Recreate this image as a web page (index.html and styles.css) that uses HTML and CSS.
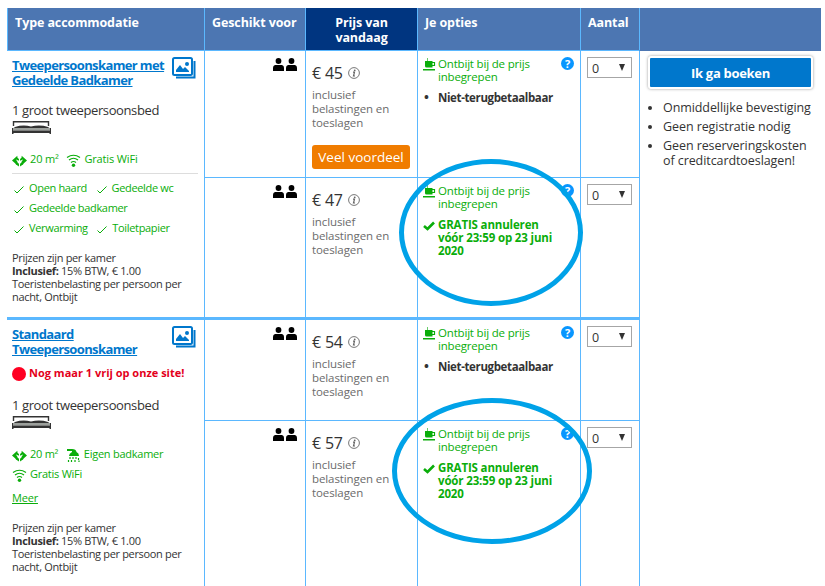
FILE: index.html
```html
<!DOCTYPE html>
<html lang="nl">
<head>
    <meta charset="UTF-8">
    <meta name="viewport" content="width=device-width, initial-scale=1.0">
    <title>Beschikbare kamers</title>
    <link rel="stylesheet" href="styles.css">
</head>
<body>

    <!-- Iconen -->
    <svg class="sprite">
        <symbol id="i-photo" viewBox="0 0 24 22">
            <path d="M22.500 4v16.500H4" fill="none" stroke="currentColor" stroke-width="2"/>
            <rect x="1" y="1" width="19" height="17" rx="1.500" fill="#fff" stroke="currentColor" stroke-width="2"/>
            <path d="M4 15v-2l4-5 3 4 2-2 4 4v1z" fill="currentColor"/>
            <circle cx="15" cy="7" r="2" fill="currentColor"/>
        </symbol>
        <symbol id="i-bed" viewBox="0 0 39 13">
            <path d="M1.500 5V.7h35V5" fill="none" stroke="#333" stroke-width="1.400"/>
            <path d="M3 6q8-2.500 16-.5Q28 3.500 36 6l2 1.500H1z" fill="#333"/>
            <path d="M1 7h37v2.500H1z" fill="#9ca09c"/>
            <path d="M0 7h1v2.500h37V7h1v6h-1.500v-1h-36v1H0z" fill="#333"/>
        </symbol>
        <symbol id="i-size" viewBox="0 0 14 12">
            <path d="M0 6l5-4.500v9zM14 6L9 1.500v9z" fill="currentColor"/>
            <path d="M3.500 6.500l3 2.500v2.500l-3-2zM10.500 6.500l-3 2.500v2.500l3-2zM4.500 3l2 1.500v1.800l-2-1zM9.500 3l-2 1.500v1.800l2-1z" fill="currentColor"/>
            <path d="M4 5.500l3 2.200 3-2.200" fill="none" stroke="#fff" stroke-width=".9"/>
        </symbol>
        <symbol id="i-wifi" viewBox="0 0 14 13">
            <path d="M.5 3.500Q7-1 13.500 3.500M2.500 6Q7 2.500 11.500 6M4.500 8.500Q7 6.500 9.500 8.500" fill="none" stroke="currentColor" stroke-width="1.200"/>
            <circle cx="7" cy="11.200" r="1.700" fill="currentColor"/>
        </symbol>
        <symbol id="i-shower" viewBox="0 0 13 13">
            <path d="M0 0h5q4 0 4.500 3Q12 4 12 7H2q0-2.500 3-4V2H0z" fill="currentColor"/>
            <path d="M3 8v2M6 8v2M9 8v2M11.500 9v2M1.500 11v2M4.500 11v2M8 11v2M12 11.500V13" stroke="currentColor" stroke-width="1.200"/>
        </symbol>
        <symbol id="i-check" viewBox="0 0 10 8">
            <path d="M.5 4.500l2.500 2.500L9.500.5" fill="none" stroke="currentColor" stroke-width="1"/>
        </symbol>
        <symbol id="i-bold-check" viewBox="0 0 12 10">
            <path d="M1 5l3.500 3L11 1.500" fill="none" stroke="currentColor" stroke-width="2.600"/>
        </symbol>
        <symbol id="i-person" viewBox="0 0 11 13">
            <circle cx="5.500" cy="3" r="2.900" fill="#000"/>
            <path d="M0 13V9.500Q0 7.500 2 7h7q2 .5 2 2.500V13z" fill="#000"/>
        </symbol>
        <symbol id="i-info" viewBox="0 0 12 12">
            <circle cx="6" cy="6" r="5.400" fill="none" stroke="#777" stroke-width="1"/>
            <circle cx="6.700" cy="3.300" r=".9" fill="#666"/>
            <path d="M5 5.200h1.500L5.500 9H7" fill="none" stroke="#666" stroke-width="1.200"/>
        </symbol>
        <symbol id="i-cup" viewBox="0 0 13 13">
            <path d="M4.500 3V0" stroke="currentColor" stroke-width="1" opacity=".6"/>
            <path d="M2 3h7.500v6.500H3.500Q2 9.500 2 8zM0 11h12v1.600H0z" fill="currentColor"/>
            <path d="M9 4.500h2.500v3H9" fill="none" stroke="currentColor" stroke-width="1.200"/>
        </symbol>
    </svg>

    <div class="rooms">
        <div class="head first">Type accommodatie</div>
        <div class="head">Geschikt voor</div>
        <div class="head price-head">Prijs van<br>vandaag</div>
        <div class="head">Je opties</div>
        <div class="head">Aantal</div>
        <div class="head last"></div>

        <!-- Kamer 1 -->
        <div class="room">
            <div class="room-top">
                <a class="room-name" href="#">Tweepersoonskamer met<br>Gedeelde Badkamer</a>
                <svg class="photo"><use href="#i-photo"/></svg>
            </div>
            <div class="bed">1 groot tweepersoonsbed</div>
            <svg class="bed-icon"><use href="#i-bed"/></svg>
            <div class="facilities">
                <span><svg class="fac"><use href="#i-size"/></svg>20 m²</span>
                <span><svg class="fac"><use href="#i-wifi"/></svg>Gratis WiFi</span>
            </div>
            <div class="checks">
                <span><svg class="tick"><use href="#i-check"/></svg>Open haard</span>
                <span><svg class="tick"><use href="#i-check"/></svg>Gedeelde wc</span>
                <br>
                <span><svg class="tick"><use href="#i-check"/></svg>Gedeelde badkamer</span>
                <br>
                <span><svg class="tick"><use href="#i-check"/></svg>Verwarming</span>
                <span><svg class="tick"><use href="#i-check"/></svg>Toiletpapier</span>
            </div>
            <div class="note">Prijzen zijn per kamer<br><b>Inclusief:</b> 15% BTW, € 1.00<br>Toeristenbelasting per persoon per<br>nacht, Ontbijt</div>
        </div>

        <div class="cell guests"><svg><use href="#i-person"/></svg><svg><use href="#i-person"/></svg></div>
        <div class="cell price">
            <div class="amount">€ 45 <svg><use href="#i-info"/></svg></div>
            <div class="tax">inclusief<br>belastingen en<br>toeslagen</div>
            <span class="deal">Veel voordeel</span>
        </div>
        <div class="cell options">
            <div class="meal"><svg><use href="#i-cup"/></svg><span>Ontbijt bij de prijs<br>inbegrepen</span><i class="help">?</i></div>
            <div class="policy"><span class="dot">•</span><span>Niet-terugbetaalbaar</span></div>
        </div>
        <div class="cell amount-cell"><div class="select"><span>0</span><i></i></div></div>

        <div class="book">
            <a class="book-btn" href="#">Ik ga boeken</a>
            <ul>
                <li>Onmiddellijke bevestiging</li>
                <li>Geen registratie nodig</li>
                <li>Geen reserveringskosten<br>of creditcardtoeslagen!</li>
            </ul>
        </div>

        <div class="cell end guests"><svg><use href="#i-person"/></svg><svg><use href="#i-person"/></svg></div>
        <div class="cell end price">
            <div class="amount">€ 47 <svg><use href="#i-info"/></svg></div>
            <div class="tax">inclusief<br>belastingen en<br>toeslagen</div>
        </div>
        <div class="cell end options">
            <div class="meal"><svg><use href="#i-cup"/></svg><span>Ontbijt bij de prijs<br>inbegrepen</span><i class="help">?</i></div>
            <div class="policy free"><svg><use href="#i-bold-check"/></svg><span>GRATIS annuleren<br>vóór 23:59 op 23 juni<br>2020</span></div>
            <div class="marker"></div>
        </div>
        <div class="cell end amount-cell"><div class="select"><span>0</span><i></i></div></div>

        <!-- Kamer 2 -->
        <div class="room second">
            <div class="room-top">
                <a class="room-name" href="#">Standaard<br>Tweepersoonskamer</a>
                <svg class="photo"><use href="#i-photo"/></svg>
            </div>
            <div class="alert"><i></i>Nog maar 1 vrij op onze site!</div>
            <div class="bed">1 groot tweepersoonsbed</div>
            <svg class="bed-icon"><use href="#i-bed"/></svg>
            <div class="facilities">
                <span><svg class="fac"><use href="#i-size"/></svg>20 m²</span>
                <span><svg class="fac"><use href="#i-shower"/></svg>Eigen badkamer</span>
                <br>
                <span><svg class="fac"><use href="#i-wifi"/></svg>Gratis WiFi</span>
            </div>
            <a class="more" href="#">Meer</a>
            <div class="note">Prijzen zijn per kamer<br><b>Inclusief:</b> 15% BTW, € 1.00<br>Toeristenbelasting per persoon per<br>nacht, Ontbijt</div>
        </div>

        <div class="cell guests"><svg><use href="#i-person"/></svg><svg><use href="#i-person"/></svg></div>
        <div class="cell price">
            <div class="amount">€ 54 <svg><use href="#i-info"/></svg></div>
            <div class="tax">inclusief<br>belastingen en<br>toeslagen</div>
        </div>
        <div class="cell options">
            <div class="meal"><svg><use href="#i-cup"/></svg><span>Ontbijt bij de prijs<br>inbegrepen</span><i class="help">?</i></div>
            <div class="policy"><span class="dot">•</span><span>Niet-terugbetaalbaar</span></div>
        </div>
        <div class="cell amount-cell"><div class="select"><span>0</span><i></i></div></div>

        <div class="cell bottom guests"><svg><use href="#i-person"/></svg><svg><use href="#i-person"/></svg></div>
        <div class="cell bottom price">
            <div class="amount">€ 57 <svg><use href="#i-info"/></svg></div>
            <div class="tax">inclusief<br>belastingen en<br>toeslagen</div>
        </div>
        <div class="cell bottom options">
            <div class="meal"><svg><use href="#i-cup"/></svg><span>Ontbijt bij de prijs<br>inbegrepen</span><i class="help">?</i></div>
            <div class="policy free"><svg><use href="#i-bold-check"/></svg><span>GRATIS annuleren<br>vóór 23:59 op 23 juni<br>2020</span></div>
            <div class="marker wide"></div>
        </div>
        <div class="cell bottom amount-cell"><div class="select"><span>0</span><i></i></div></div>
    </div>

</body>
</html>
```

FILE: styles.css
```css
* {
    box-sizing: border-box;
}
body {
    margin: 0;
    height: 586px;
    overflow: hidden;
    background-color: #fff;
    color: #333;
    font-family: "Segoe UI", "Open Sans", "Noto Sans", sans-serif;
    font-size: 12px;
    white-space: nowrap;
}
svg {
    display: block;
    flex: none;
}
.sprite {
    position: absolute;
    width: 0;
    height: 0;
}
.rooms {
    display: grid;
    grid-template-columns: 197px 101px 112px 163px 59px 182px;
    grid-template-rows: 43px 127px 142px 101px 165px;
    margin: 8px 0 0 7px;
}

/* kop van de tabel */
.head {
    padding: 7px 7px 0;
    border-left: 1px solid #5bb8ff;
    border-bottom: 1px solid #5bb8ff;
    background-color: #4c76b2;
    color: #fff;
    font-size: 12.5px;
    font-weight: bold;
    letter-spacing: -0.1px;
    line-height: 15px;
}
.price-head {
    background-color: #003580;
    text-align: center;
}
.head.last {
    border-bottom-color: #4c76b2;
}

.cell {
    border-left: 1px solid #5bb8ff;
    border-bottom: 1px solid #5bb8ff;
}
.cell.end {
    border-bottom-width: 3px;
}
.cell.bottom {
    border-bottom: 0;
}

/* kamer */
.room {
    grid-row: span 2;
    padding: 7px 6px 0 5px;
    border-bottom: 3px solid #5bb8ff;
}
.room.second {
    border-bottom: 0;
}
.room-top {
    display: flex;
    justify-content: space-between;
    height: 30px;
    padding-right: 2px;
}
.room-name {
    color: #0077cc;
    font-size: 13px;
    font-weight: bold;
    letter-spacing: -0.62px;
    line-height: 15px;
}
.photo {
    width: 24px;
    height: 22px;
    margin-top: -1px;
    color: #0077cc;
}
.bed {
    margin-top: 14px;
    font-size: 13px;
    letter-spacing: -0.39px;
    line-height: 16px;
}
.bed-icon {
    width: 39px;
    height: 13px;
    margin-top: 3px;
}
.facilities {
    margin-top: 15px;
    color: #0aad0a;
    font-size: 11px;
    letter-spacing: -0.15px;
    line-height: 20px;
}
.facilities span, .checks span {
    display: inline-flex;
    align-items: center;
    vertical-align: top;
    margin-right: 5px;
}
.fac {
    width: 15px;
    height: 13px;
    margin: 2px 3px 0 0;
}
.checks {
    margin-top: 4px;
    padding: 4px 0 0 2px;
    border-top: 1px solid #ddd;
    color: #0aad0a;
    font-size: 11px;
    letter-spacing: -0.33px;
    line-height: 20px;
}
.checks span {
    margin-right: 7px;
}
.tick {
    width: 10px;
    height: 8px;
    margin: 4px 5px 0 0;
}
.note {
    margin-top: 13px;
    font-size: 11px;
    letter-spacing: -0.33px;
    line-height: 13px;
}
.alert {
    display: flex;
    align-items: center;
    height: 15px;
    margin-top: 8px;
    color: #e3001b;
    font-size: 11px;
    font-weight: bold;
    line-height: 15px;
}
.alert i {
    width: 14px;
    height: 14px;
    margin: 3px 3px 0 0;
    border-radius: 50%;
    background-color: #ff0022;
}
.second .bed {
    margin-top: 17px;
}
.second .facilities {
    letter-spacing: -0.25px;
}
.more {
    display: inline-block;
    margin-top: 6px;
    color: #0aad0a;
    font-size: 11px;
    letter-spacing: -0.2px;
    line-height: 16px;
}
.second .note {
    margin-top: 15px;
}

/* personen */
.guests {
    display: flex;
    justify-content: flex-end;
    gap: 2px;
    padding: 7px 8px 0 0;
}
.guests svg {
    width: 11px;
    height: 13px;
}

/* prijs */
.price {
    padding: 11px 0 0 6px;
}
.amount {
    display: flex;
    align-items: center;
    gap: 5px;
    font-size: 16px;
    letter-spacing: -0.2px;
    line-height: 22px;
}
.amount svg {
    width: 12px;
    height: 12px;
}
.tax {
    margin-top: 4px;
    color: #6b6b6b;
    font-size: 11.5px;
    letter-spacing: -0.1px;
    line-height: 14px;
}
.deal {
    display: block;
    width: 98px;
    margin-top: 15px;
    border-radius: 3px;
    background-color: #f07c00;
    color: #fff;
    font-size: 13.5px;
    line-height: 24px;
    text-align: center;
}

/* opties */
.options {
    position: relative;
    padding: 6px 6px 0 5px;
}
.meal, .policy {
    display: flex;
    line-height: 13px;
}
.meal {
    color: #0aad0a;
    font-size: 11.5px;
    letter-spacing: -0.18px;
}
.meal svg {
    width: 13px;
    height: 13px;
    margin: 1px 2px 0 0;
}
.help {
    width: 13px;
    height: 13px;
    margin-left: auto;
    border-radius: 50%;
    background-color: #0896ff;
    color: #fff;
    font-size: 11px;
    font-style: normal;
    font-weight: bold;
    text-align: center;
}
.policy {
    margin-top: 8px;
    font-size: 11.5px;
    font-weight: bold;
    letter-spacing: -0.37px;
}
.dot {
    width: 15px;
    padding-left: 1px;
    font-size: 13px;
}
.free {
    color: #0aad0a;
    letter-spacing: -0.15px;
}
.free svg {
    width: 12px;
    height: 10px;
    margin: 3px 3px 0 0;
}

/* blauwe cirkels over de opties */
.marker {
    position: absolute;
    z-index: 1;
    top: -19px;
    left: -19px;
    width: 184px;
    height: 147px;
    border: 5px solid #00a2e8;
    border-radius: 50%;
}
.marker.wide {
    top: -23px;
    left: -26px;
    width: 200px;
    height: 146px;
}

.amount-cell {
    padding: 6px 0 0 6px;
}
.select {
    display: flex;
    justify-content: space-between;
    align-items: center;
    width: 45px;
    height: 21px;
    padding: 2px 6px 0 4px;
    border: 1px solid #a6a6a6;
    font-size: 12.5px;
    line-height: 18px;
}
.select i {
    margin-bottom: 3px;
    border: 3.5px solid transparent;
    border-top: 7px solid #333;
    border-bottom: 0;
}

/* boeken */
.book {
    grid-row: span 4;
    padding: 5px 8px 0;
    border-left: 1px solid #5bb8ff;
}
.book-btn {
    display: block;
    height: 33px;
    border: 2px solid #fff;
    border-radius: 3px;
    background-color: #0077cc;
    box-shadow: 0 0 3px #999;
    color: #fff;
    font-size: 13px;
    font-weight: bold;
    letter-spacing: -0.3px;
    line-height: 30px;
    text-align: center;
    text-decoration: none;
}
.book ul {
    margin: 11px 0 0;
    padding-left: 15px;
    font-size: 12.5px;
    letter-spacing: -0.08px;
    line-height: 15px;
}
.book li {
    margin-bottom: 4px;
}
```
